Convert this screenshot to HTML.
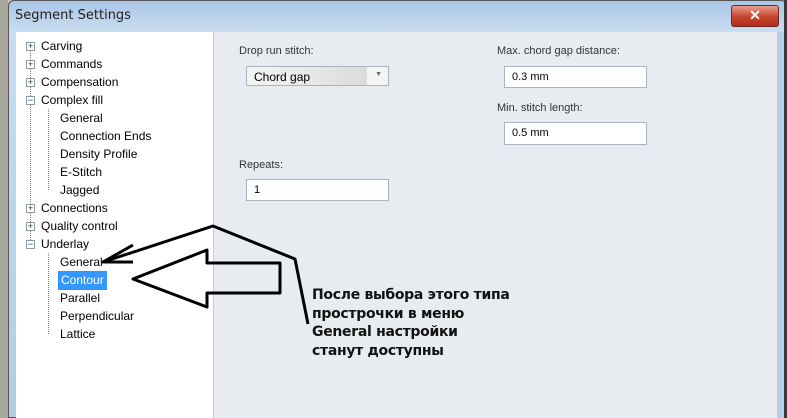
<!DOCTYPE html>
<html><head><meta charset="utf-8"><style>
body{margin:0;width:787px;height:418px;overflow:hidden;position:relative;background:#bfc6cc;font-family:"Liberation Sans",sans-serif}
.a{position:absolute}
.tree{left:16px;top:32px;width:197px;height:386px;background:#fff;border-right:1px solid #c8ccd2}
.right{left:214px;top:32px;width:563px;height:386px;background:#e8ebf0}
.row{position:absolute;font-size:12px;color:#000;white-space:nowrap}
.box{position:absolute;width:7px;height:7px;border:1px solid #8c99a8;background:#fff;font-size:9px;line-height:7px;text-align:center;color:#333}
.lbl{position:absolute;font-size:11px;color:#333}
.inp{position:absolute;background:#fff;border:1px solid #acb3bc;font-size:11px;color:#000;box-sizing:border-box;padding:4px 0 0 7px}
.note{left:312px;top:286px;font-weight:bold;font-size:14px;line-height:18.5px;color:#111;font-family:"DejaVu Sans","Liberation Sans",sans-serif;letter-spacing:-0.3px}
</style></head><body>
<div class="a" style="left:8px;top:0;width:779px;height:418px;background:linear-gradient(#a9c6e6,#c9dcf0 30px,#b3cbe3);border:1px solid #555;border-radius:6px 6px 0 0;box-sizing:border-box"></div>
<div class="a" style="left:15px;top:8px;font-size:13px;color:#222;font-family:'DejaVu Sans',sans-serif">Segment Settings</div>
<div class="a" style="left:731px;top:5px;width:46px;height:20px;background:linear-gradient(#e8a090,#c6422c 55%,#b0301c);border:1px solid #6a2a20;border-radius:3px;color:#fff;font-weight:bold;font-size:14px;text-align:center;line-height:19px">✕</div>
<div class="a tree"></div>
<div class="a right"></div>
<div class="a" style="left:777px;top:32px;width:7px;height:386px;background:#b4cde8"></div>
<div class="a" style="left:784px;top:0;width:3px;height:418px;background:#3a3a3a"></div>
<div class="a" style="left:0;top:0;width:8px;height:418px;background:#a8a89a"></div>

<div class="a" style="left:30px;top:50px;height:192px;border-left:1px dotted #888"></div>
<div class="a" style="left:48px;top:109px;height:81px;border-left:1px dotted #888"></div>
<div class="a" style="left:48px;top:253px;height:81px;border-left:1px dotted #888"></div>

<div class="box" style="left:26px;top:42px">+</div><div class="row" style="left:41px;top:39px">Carving</div>
<div class="box" style="left:26px;top:60px">+</div><div class="row" style="left:41px;top:57px">Commands</div>
<div class="box" style="left:26px;top:78px">+</div><div class="row" style="left:41px;top:75px">Compensation</div>
<div class="box" style="left:26px;top:96px">−</div><div class="row" style="left:41px;top:93px">Complex fill</div>
<div class="row" style="left:60px;top:111px">General</div>
<div class="row" style="left:60px;top:129px">Connection Ends</div>
<div class="row" style="left:60px;top:147px">Density Profile</div>
<div class="row" style="left:60px;top:165px">E-Stitch</div>
<div class="row" style="left:60px;top:183px">Jagged</div>
<div class="box" style="left:26px;top:204px">+</div><div class="row" style="left:41px;top:201px">Connections</div>
<div class="box" style="left:26px;top:222px">+</div><div class="row" style="left:41px;top:219px">Quality control</div>
<div class="box" style="left:26px;top:240px">−</div><div class="row" style="left:41px;top:237px">Underlay</div>
<div class="row" style="left:60px;top:255px">General</div>
<div class="row" style="left:58px;top:271px;background:#3399ff;color:#fff;padding:1px 2px;border:1px dotted #c07020;line-height:15px">Contour</div>
<div class="row" style="left:60px;top:291px">Parallel</div>
<div class="row" style="left:60px;top:309px">Perpendicular</div>
<div class="row" style="left:60px;top:327px">Lattice</div>

<div class="lbl" style="left:239px;top:45px">Drop run stitch:</div>
<div class="inp" style="left:246px;top:66px;width:143px;height:20px;background:linear-gradient(90deg,#f4f4f4,#dcdcdc 85%,#f4f4f4 85%);padding-top:3px;font-size:12px">Chord gap<span style="position:absolute;right:6px;top:4px;font-size:7px;color:#666">▼</span></div>
<div class="lbl" style="left:239px;top:159px">Repeats:</div>
<div class="inp" style="left:246px;top:179px;width:143px;height:22px">1</div>
<div class="lbl" style="left:497px;top:45px">Max. chord gap distance:</div>
<div class="inp" style="left:504px;top:66px;width:143px;height:22px">0.3 mm</div>
<div class="lbl" style="left:497px;top:102px">Min. stitch length:</div>
<div class="inp" style="left:504px;top:122px;width:143px;height:23px">0.5 mm</div>

<svg class="a" style="left:0;top:0" width="787" height="418">
<g fill="none" stroke="#000" stroke-width="3" stroke-linejoin="round">
<polyline points="133,245 103,262 133,262"/>
<polyline points="103,262 213,226 295,259 308,324"/>
<polygon points="133,279 207,250 207,263 280,263 280,293 207,293 207,307"/>
</g></svg>

<div class="a note">После выбора этого типа<br>прострочки в меню<br>General настройки<br>станут доступны</div>
</body></html>
